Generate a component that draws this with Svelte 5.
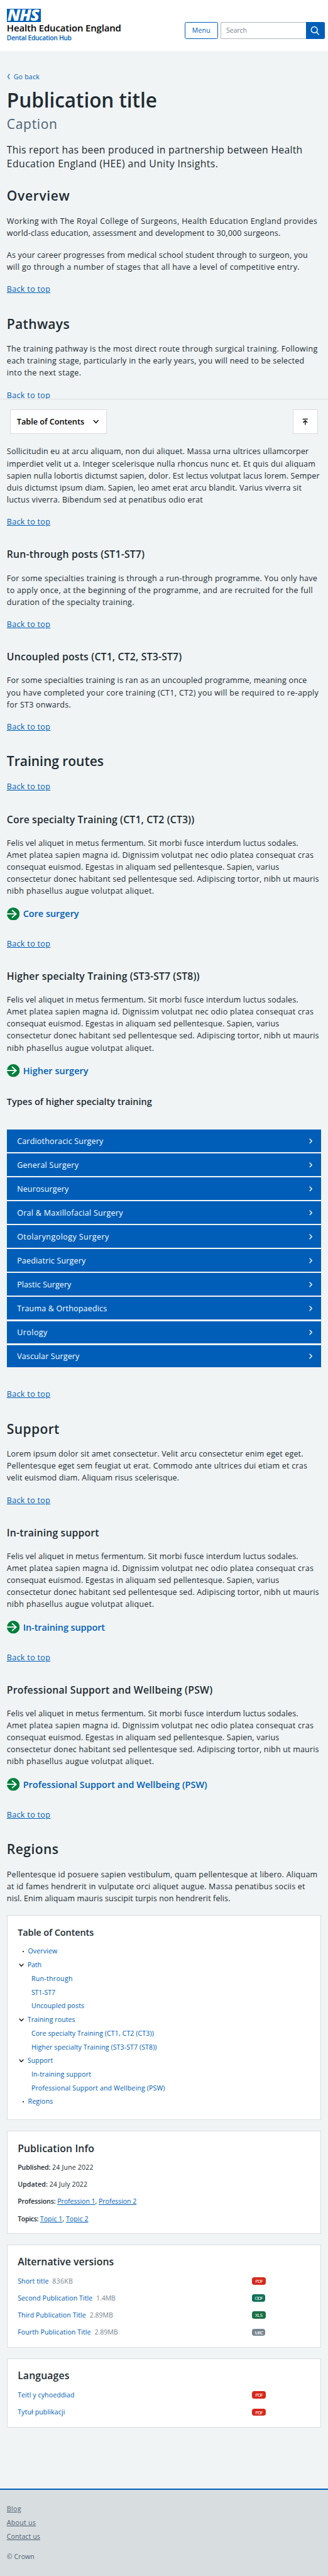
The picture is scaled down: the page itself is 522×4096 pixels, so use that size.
<script>
  // Tracks a line of text so that it sets to the given measure.
  function fit(node, width) {
    const page = node.closest('.page');
    const ratio = page.getBoundingClientRect().width / 768.6;
    const natural = node.getBoundingClientRect().width / ratio;
    const gaps = Math.max(1, node.textContent.length - 1);
    node.style.letterSpacing = `${((width - natural) / gaps).toFixed(3)}px`;
  }

  const felis = [
    ['Felis vel aliquet in metus fermentum. Sit morbi fusce interdum luctus sodales.', 682.8],
    ['Amet platea sapien magna id. Dignissim volutpat nec odio platea consequat cras', 718.5],
    ['consequat euismod. Egestas in aliquam sed pellentesque. Sapien, varius', 638.2],
    ['consectetur donec habitant sed pellentesque sed. Adipiscing tortor, nibh ut mauris', 731.3],
    ['nibh phasellus augue volutpat aliquet.', 344.8]
  ];

  const surgeries = [
    ['Cardiothoracic Surgery', 201.8],
    ['General Surgery', 144],
    ['Neurosurgery', 121],
    ['Oral & Maxillofacial Surgery', 247.8],
    ['Otolaryngology Surgery', 215],
    ['Paediatric Surgery', 160.7],
    ['Plastic Surgery', 126.9],
    ['Trauma & Orthopaedics', 210.6],
    ['Urology', 71],
    ['Vascular Surgery', 146]
  ];

  const contents = [
    ['dot', 'Overview', 69],
    ['open', 'Path', 32.8],
    ['sub', 'Run-through', 96.5],
    ['sub', 'ST1-ST7', 56.3],
    ['sub', 'Uncoupled posts', 123.9],
    ['open', 'Training routes', 111.7],
    ['sub', 'Core specialty Training (CT1, CT2 (CT3))', 287],
    ['sub', 'Higher specialty Training (ST3-ST7 (ST8))', 293.9],
    ['open', 'Support', 59.8],
    ['sub', 'In-training support', 140],
    ['sub', 'Professional Support and Wellbeing (PSW)', 313],
    ['dot', 'Regions', 58.8]
  ];

  const versions = [
    ['Short title', 72.5, '836KB', 48, 'PDF'],
    ['Second Publication Title', 175.3, '1.4MB', 45.5, 'ODF'],
    ['Third Publication Title', 160, '2.89MB', 54.9, 'XLS'],
    ['Fourth Publication Title', 171.4, '2.89MB', 54.9, 'MRC']
  ];

  const languages = [
    ['Teitl y cyhoeddiad', 133, '', 0, 'PDF'],
    ['Tytuł publikacji', 110.7, '', 0, 'PDF']
  ];
</script>

{#snippet t(text, width)}<span class="t" use:fit={width}>{text}</span>{/snippet}

{#snippet para(lines)}
  <p>
    {#each lines as [text, width]}
      <span class="line">{@render t(text, width)}</span>
    {/each}
  </p>
{/snippet}

{#snippet backToTop()}
  <div class="back"><a href="#top">{@render t('Back to top', 101.6)}</a></div>
{/snippet}

{#snippet action(text, width)}
  <div class="action">
    <svg width="30" height="30" viewBox="0 0 30 30">
      <circle cx="15" cy="15" r="15" fill="#007f3b" />
      <path d="M0 15H22M11.8 6.2L21.6 15L11.8 23.8" fill="none" stroke="#fff" stroke-width="2.7" />
    </svg>
    <a href="#top">{@render t(text, width)}</a>
  </div>
{/snippet}

{#snippet files(rows)}
  {#each rows as [title, width, size, sizeWidth, kind]}
    <div class="file">
      <div class="name">
        <a href="#top">{@render t(title, width)}</a>
        {#if size}<span class="size">{@render t(size, sizeWidth)}</span>{/if}
      </div>
      <span class="badge {kind.toLowerCase()}">{@render t(kind, kind === 'MRC' ? 20.8 : kind === 'ODF' ? 19.5 : 18)}</span>
    </div>
  {/each}
{/snippet}

<div class="page" id="top">
  <header>
    <div class="brand">
      <div class="logo"><span>NHS</span></div>
      <div class="org">{@render t('Health Education England', 268)}</div>
      <div class="hub">{@render t('Dental Education Hub', 152)}</div>
    </div>
    <div class="tools">
      <button class="menu">{@render t('Menu', 42.5)}</button>
      <div class="search">
        <div class="field">{@render t('Search', 48.5)}</div>
        <button class="go" aria-label="Search">
          <svg width="24" height="24" viewBox="0 0 24 24" fill="none" stroke="#fff" stroke-width="2.1" stroke-linecap="round">
            <circle cx="10.6" cy="9.4" r="7.2" /><path d="M15.8 14.8L21 20.6" />
          </svg>
        </button>
      </div>
    </div>
  </header>

  <main>
    <div class="goback">
      <svg width="8" height="18" viewBox="0 0 8 18" fill="none" stroke="#005eb8" stroke-width="2"><path d="M6.8 1.2L1.6 9L6.8 16.8" /></svg>
      <a href="#top">{@render t('Go back', 60.5)}</a>
    </div>
    <h1>{@render t('Publication title', 352)}</h1>
    <div class="caption">{@render t('Caption', 118)}</div>
    <div class="lead">
      <span class="line">{@render t('This report has been produced in partnership between Health', 692.6)}</span>
      <span class="line">{@render t('Education England (HEE) and Unity Insights.', 494.7)}</span>
    </div>

    <h2>{@render t('Overview', 147)}</h2>
    {@render para([
      ['Working with The Royal College of Surgeons, Health Education England provides', 727.3],
      ['world-class education, assessment and development to 30,000 surgeons.', 641]
    ])}
    {@render para([
      ['As your career progresses from medical school student through to surgeon, you', 704.8],
      ['will go through a number of stages that all have a level of competitive entry.', 685.7]
    ])}
    {@render backToTop()}

    <h2>{@render t('Pathways', 147)}</h2>
    {@render para([
      ['The training pathway is the most direct route through surgical training. Following', 727.8],
      ['each training stage, particularly in the early years, you will need to be selected', 697],
      ['into the next stage.', 173.9]
    ])}
    {@render backToTop()}

    <div class="bar">
      <button class="toc">
        {@render t('Table of Contents', 158)}
        <svg width="14" height="10" viewBox="0 0 14 10" fill="none" stroke="#000" stroke-width="2"><path d="M1.3 1.5L7 8L12.7 1.5" /></svg>
      </button>
      <button class="up" aria-label="Back to top">
        <svg width="14" height="16" viewBox="0 0 14 16" fill="none" stroke="#000" stroke-width="1.9"><path d="M1 2H13M7 15.5V6M2 10.3L7 5.3L12 10.3" /></svg>
      </button>
    </div>

    {@render para([
      ['Sollicitudin eu at arcu aliquam, non dui aliquet. Massa urna ultrices ullamcorper', 707.3],
      ['imperdiet velit ut a. Integer scelerisque nulla rhoncus nunc et. Et quis dui aliquam', 722.9],
      ['sapien nulla lobortis dictumst sapien, dolor. Est lectus volutpat lacus lorem. Semper', 732.7],
      ['duis dictumst ipsum diam. Sapien, leo amet erat arcu blandit. Varius viverra sit', 690.6],
      ['luctus viverra. Bibendum sed at penatibus odio erat', 459]
    ])}
    {@render backToTop()}

    <h3>{@render t('Run-through posts (ST1-ST7)', 322.8)}</h3>
    {@render para([
      ['For some specialties training is through a run-through programme. You only have', 727.3],
      ['to apply once, at the beginning of the programme, and are recruited for the full', 716.6],
      ['duration of the specialty training.', 298.3]
    ])}
    {@render backToTop()}

    <h3>{@render t('Uncoupled posts (CT1, CT2, ST3-ST7)', 410)}</h3>
    {@render para([
      ['For some specialties training is ran as an uncoupled programme, meaning once', 702.9],
      ['you have completed your core training (CT1, CT2) you will be required to re-apply', 730.3],
      ['for ST3 onwards.', 149.9]
    ])}
    {@render backToTop()}

    <h2>{@render t('Training routes', 227)}</h2>
    {@render backToTop()}

    <h3>{@render t('Core specialty Training (CT1, CT2 (CT3))', 439.3)}</h3>
    {@render para(felis)}
    {@render action('Core surgery', 131)}
    {@render backToTop()}

    <h3>{@render t('Higher specialty Training (ST3-ST7 (ST8))', 451.6)}</h3>
    {@render para(felis)}
    {@render action('Higher surgery', 153)}

    <h4>{@render t('Types of higher specialty training', 340)}</h4>
    <div class="types">
      {#each surgeries as [name, width]}
        <a class="type" href="#top">
          {@render t(name, width)}
          <svg width="8" height="13" viewBox="0 0 8 13" fill="none" stroke="#fff" stroke-width="2"><path d="M1 .8C2.8 3.3 5.4 5 6.2 6.5C5.4 8 2.8 9.7 1 12.2" /></svg>
        </a>
      {/each}
    </div>
    {@render backToTop()}

    <h2>{@render t('Support', 123)}</h2>
    {@render para([
      ['Lorem ipsum dolor sit amet consectetur. Velit arcu consectetur enim eget eget.', 694.5],
      ['Pellentesque eget sem feugiat ut erat. Commodo ante ultrices dui etiam et cras', 703.8],
      ['velit euismod diam. Aliquam risus scelerisque.', 403.6]
    ])}
    {@render backToTop()}

    <h3>{@render t('In-training support', 216)}</h3>
    {@render para(felis)}
    {@render action('In-training support', 192)}
    {@render backToTop()}

    <h3>{@render t('Professional Support and Wellbeing (PSW)', 482)}</h3>
    {@render para(felis)}
    {@render action('Professional Support and Wellbeing (PSW)', 431.5)}
    {@render backToTop()}

    <h2>{@render t('Regions', 121)}</h2>
    {@render para([
      ['Pellentesque id posuere sapien vestibulum, quam pellentesque at libero. Aliquam', 727.8],
      ['at id fames hendrerit in vulputate orci aliquet augue. Massa penatibus sociis et', 698.9],
      ['nisl. Enim aliquam mauris suscipit turpis non hendrerit felis.', 523.6]
    ])}

    <section class="card contents">
      <h5 class="small">{@render t('Table of Contents', 178.3)}</h5>
      {#each contents as [kind, text, width]}
        <div class="entry {kind}">
          <span class="mark">
            {#if kind === 'open'}
              <svg width="12" height="8" viewBox="0 0 12 8" fill="none" stroke="#000" stroke-width="1.9"><path d="M1 1L6 6.6L11 1" /></svg>
            {:else if kind === 'dot'}
              <i></i>
            {/if}
          </span>
          <a href="#top">{@render t(text, width)}</a>
        </div>
      {/each}
    </section>

    <section class="card info">
      <h5>{@render t('Publication Info', 179.3)}</h5>
      <div class="row"><b>{@render t('Published:', 77)}</b><span>{@render t('24 June 2022', 96.5)}</span></div>
      <div class="row"><b>{@render t('Updated:', 70.2)}</b><span>{@render t('24 July 2022', 89)}</span></div>
      <div class="row">
        <b>{@render t('Professions:', 89)}</b>
        <span><a href="#top">{@render t('Profession 1', 89)}</a>,</span>
        <a href="#top">{@render t('Profession 2', 88.7)}</a>
      </div>
      <div class="row">
        <b>{@render t('Topics:', 49)}</b>
        <span><a href="#top">{@render t('Topic 1', 52.4)}</a>,</span>
        <a href="#top">{@render t('Topic 2', 52.4)}</a>
      </div>
    </section>

    <section class="card">
      <h5>{@render t('Alternative versions', 225.3)}</h5>
      {@render files(versions)}
    </section>

    <section class="card">
      <h5>{@render t('Languages', 121)}</h5>
      {@render files(languages)}
    </section>
  </main>

  <footer>
    <a href="#top">{@render t('Blog', 33.3)}</a>
    <a href="#top">{@render t('About us', 67.6)}</a>
    <a href="#top">{@render t('Contact us', 77.9)}</a>
    <div class="crown">{@render t('© Crown', 64.7)}</div>
  </footer>
</div>

<style>
  :global(body) {
    margin: 0;
    background: #f0f4f5;
  }
  .page {
    zoom: 0.67916;
    width: 768.6px;
    height: 6031px;
    box-sizing: border-box;
    display: flex;
    flex-direction: column;
    overflow: hidden;
    background: #f0f4f5;
    color: #212b32;
    font-family: 'Open Sans', 'Noto Sans', sans-serif;
    font-size: 18.4px;
    line-height: 28px;
  }
  .t,
  .line {
    white-space: nowrap;
  }
  .line {
    display: block;
  }
  a {
    color: #005eb8;
  }
  button {
    font: inherit;
    margin: 0;
    padding: 0;
    box-sizing: border-box;
  }
  svg {
    display: block;
    flex: none;
  }

  header {
    flex: none;
    height: 120px;
    box-sizing: border-box;
    padding: 20px 8px 0 16px;
    display: flex;
    justify-content: space-between;
    background: #fff;
  }
  .logo {
    width: 80px;
    height: 32px;
    background: #005eb8;
    color: #fff;
    display: flex;
    align-items: flex-start;
    justify-content: center;
  }
  .logo span {
    font-size: 36.4px;
    font-weight: 800;
    font-style: italic;
    line-height: 30px;
    letter-spacing: -1.6px;
    transform: scaleX(1.05);
    margin-left: -3px;
  }
  .org {
    color: #000;
    font-size: 22px;
    font-weight: 600;
    line-height: 28px;
  }
  .hub {
    color: #005eb8;
    font-size: 15.3px;
    font-weight: 600;
    line-height: 18px;
  }
  .tools {
    display: flex;
    gap: 6px;
    margin-top: 32px;
    height: 40px;
    font-size: 15.6px;
  }
  .menu {
    width: 78px;
    height: 40px;
    border: 1px solid #005eb8;
    border-radius: 4px;
    background: #fff;
    color: #005eb8;
  }
  .search {
    display: flex;
  }
  .field {
    box-sizing: border-box;
    width: 200px;
    height: 40px;
    padding: 0 12px;
    line-height: 38px;
    border: 1px solid #aeb7bd;
    border-right: 0;
    border-radius: 4px 0 0 4px;
    color: #768692;
  }
  .go {
    width: 44px;
    height: 40px;
    border: 0;
    border-radius: 0 4px 4px 0;
    background: #005eb8;
    display: flex;
    align-items: center;
    justify-content: center;
  }

  main {
    flex: 1;
    padding: 48px 16px 0;
  }
  .goback {
    display: flex;
    align-items: center;
    gap: 8px;
    height: 24px;
    font-size: 15.6px;
    line-height: 24px;
  }
  .goback svg {
    height: 14px;
  }
  .goback a,
  .action a,
  .entry a,
  .file a {
    text-decoration: none;
  }
  h1,
  h2,
  h3,
  h4,
  h5,
  p {
    margin: 0;
    font-weight: 600;
  }
  h1 {
    margin-top: 14px;
    font-size: 46.5px;
    line-height: 56px;
  }
  .caption {
    margin-top: 9px;
    font-size: 31px;
    line-height: 40px;
    color: #4c6272;
  }
  .lead {
    margin: 25px 0 39px;
    font-size: 23.2px;
    line-height: 32px;
  }
  h2 {
    margin-bottom: 24px;
    font-size: 31px;
    line-height: 40px;
  }
  h3 {
    margin-bottom: 24px;
    font-size: 23.2px;
    line-height: 32px;
  }
  h4 {
    height: 82px;
    font-size: 21.3px;
    line-height: 32px;
  }
  p {
    margin-bottom: 24px;
    font-weight: 400;
  }
  .back {
    height: 28px;
    margin-bottom: 48px;
  }
  .back a {
    text-decoration-thickness: 1px;
    text-underline-offset: 2px;
  }
  .action {
    height: 30px;
    margin: 25px 0 41px;
    display: flex;
    align-items: center;
    gap: 8px;
    font-size: 21.3px;
    font-weight: 600;
  }

  .bar {
    position: relative;
    margin: -54px -16px 4.3px;
    height: 106px;
    box-sizing: border-box;
    padding: 24px 24px 0;
    border-top: 1px solid #d8dde0;
    background: #f0f4f5;
    display: flex;
    justify-content: space-between;
  }
  .toc,
  .up {
    height: 58px;
    border: 1px solid #d8dde0;
    background: #fff;
    color: #000;
    display: flex;
    align-items: center;
  }
  .toc {
    width: 227px;
    padding-left: 14px;
    gap: 21px;
    font-size: 18.8px;
    font-weight: 600;
  }
  .up {
    width: 59px;
    justify-content: center;
  }

  .types {
    display: flex;
    flex-direction: column;
    gap: 4px;
    margin-bottom: 49.3px;
  }
  .type {
    height: 52px;
    box-sizing: border-box;
    padding: 0 20px 0 24px;
    display: flex;
    align-items: center;
    justify-content: space-between;
    background: #005eb8;
    color: #fff;
    text-decoration: none;
  }

  .card {
    box-sizing: border-box;
    margin-bottom: 25px;
    padding: 24px 24px 23px;
    border: 1px solid #d8dde0;
    background: #fff;
    font-size: 15.6px;
    line-height: 24px;
  }
  h5 {
    margin-bottom: 16px;
    font-size: 23.2px;
    line-height: 32px;
  }
  h5.small {
    margin-bottom: 12px;
    font-size: 21.3px;
  }
  .contents {
    height: 481px;
    margin-top: 25px;
  }
  .entry {
    display: flex;
    align-items: center;
    height: 32px;
  }
  .mark {
    display: flex;
    justify-content: flex-end;
    width: 15px;
    margin-right: 8px;
  }
  .sub .mark {
    width: 24px;
  }
  .dot .mark {
    margin-right: 9px;
  }
  .mark i {
    width: 3px;
    height: 3px;
    border-radius: 50%;
    background: #000;
  }
  .row {
    display: flex;
    gap: 4px;
    height: 24px;
    margin-bottom: 16px;
  }
  .row b {
    font-weight: 600;
  }
  .info {
    height: 241px;
  }
  .file {
    display: flex;
    align-items: center;
    height: 24px;
    margin-bottom: 16px;
  }
  .row:last-child,
  .file:last-child {
    margin-bottom: 0;
  }
  .name {
    display: flex;
    gap: 8.5px;
    width: 549px;
  }
  .size {
    color: #768692;
  }
  .badge {
    min-width: 18px;
    height: 17px;
    padding: 0 7px;
    border-radius: 5.5px;
    color: #fff;
    font-size: 11.4px;
    line-height: 19px;
    text-align: center;
  }
  .pdf {
    background: #d5281b;
  }
  .odf {
    padding: 0 6.2px;
    background: #0f7058;
  }
  .xls {
    background: #1d7044;
  }
  .mrc {
    padding: 0 6.2px;
    background: #768692;
  }

  footer {
    flex: none;
    height: 204px;
    box-sizing: border-box;
    padding: 32px 16px 0;
    border-top: 4px solid #005eb8;
    background: #d8dde0;
    color: #4c6272;
    font-size: 15.6px;
    display: flex;
    flex-direction: column;
    align-items: flex-start;
    gap: 8px;
    line-height: 24px;
  }
  footer a {
    color: #4c6272;
    text-underline-offset: 2px;
    text-decoration-thickness: 1px;
  }
  .crown {
    margin-top: 16px;
  }
</style>
